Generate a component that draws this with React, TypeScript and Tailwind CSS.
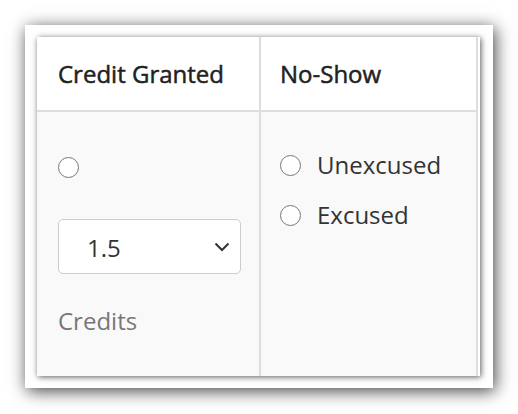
function Radio() {
  return (
    <span className="block h-[21px] w-[21px] shrink-0 rounded-full border-[1.5px] border-[#767676] bg-white" />
  );
}

function Chevron() {
  return (
    <svg width="16" height="10" viewBox="0 0 16 10" fill="none">
      <path d="M1.5 1.5 L8 8 L14.5 1.5" stroke="#333" strokeWidth="2" />
    </svg>
  );
}

export default function App() {
  return (
    <div
      className="min-h-[414px] w-[518px] bg-white p-[25px] text-[24px] text-[#333]"
      style={{ fontFamily: '"Open Sans", "Noto Sans", sans-serif' }}
    >
      <div className="h-[363px] w-[468px] bg-white p-[12px] shadow-[2px_3px_16px_rgba(0,0,0,0.75)]">
        <div className="flex h-[339px] w-[443px] bg-white pr-[2px] shadow-[1px_1px_6px_rgba(0,0,0,0.65)]">
          <div className="grid flex-1 grid-cols-[224px_1fr] grid-rows-[75px_1fr] border-r-2 border-[#ddd]">
            <div className="flex items-center border-b-2 border-r-2 border-[#ddd] bg-white pl-[21px] text-[#222] [-webkit-text-stroke:0.5px_#222]">
              Credit Granted
            </div>
            <div className="flex items-center border-b-2 border-[#ddd] bg-white pl-[19px] text-[#222] [-webkit-text-stroke:0.5px_#222]">
              No-Show
            </div>
            <div className="flex flex-col border-r-2 border-[#ddd] bg-[#f9f9f9] pl-[21px] pt-[45px]">
              <Radio />
              <div className="mt-[41px] flex h-[55px] w-[183px] items-center justify-between rounded-[5px] border border-[#ccc] bg-white pl-[28px] pr-[10px]">
                <span className="pt-[2px] text-[#333]">1.5</span>
                <Chevron />
              </div>
              <div className="mt-[29px] text-[#777]">Credits</div>
            </div>
            <div className="flex flex-col gap-[14px] bg-[#f9f9f9] pl-[19px] pt-[35px]">
              <label className="flex items-center gap-[16px]">
                <Radio />
                <span>Unexcused</span>
              </label>
              <label className="flex items-center gap-[16px]">
                <Radio />
                <span>Excused</span>
              </label>
            </div>
          </div>
        </div>
      </div>
    </div>
  );
}
